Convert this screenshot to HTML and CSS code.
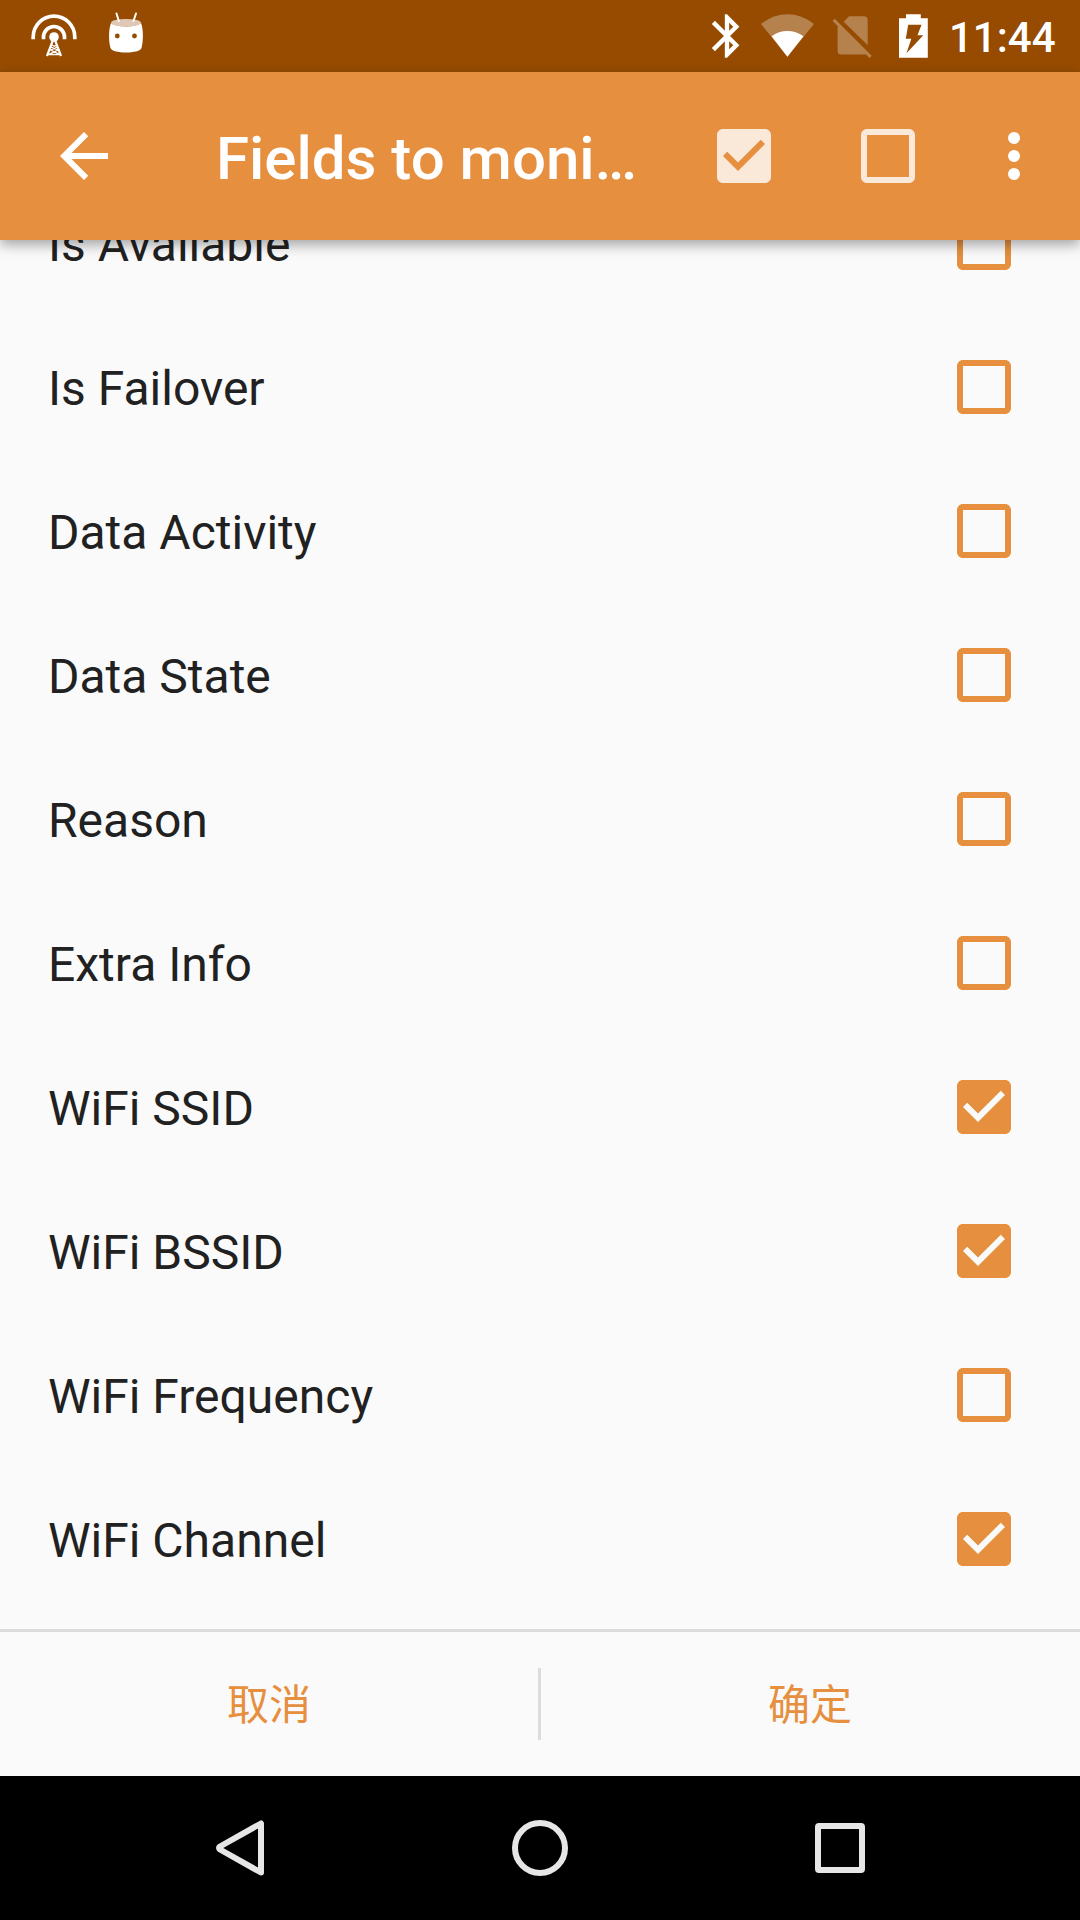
FILE: index.html
```html
<!DOCTYPE html>
<html lang="zh-CN">
<head>
<meta charset="utf-8">
<title>Fields to monitor</title>
<link rel="stylesheet" href="styles.css">
</head>
<body>
<svg class="defs" width="0" height="0">
  <symbol id="off" viewBox="0 0 24 24"><path d="M19 5v14H5V5h14m0-2H5c-1.100 0-2 .9-2 2v14c0 1.100.9 2 2 2h14c1.100 0 2-.9 2-2V5c0-1.100-.9-2-2-2z"/></symbol>
  <symbol id="on" viewBox="0 0 24 24"><path d="M19 3H5c-1.110 0-2 .9-2 2v14c0 1.100.89 2 2 2h14c1.110 0 2-.9 2-2V5c0-1.100-.89-2-2-2zm-9 14l-5-5 1.410-1.410L10 14.170l7.590-7.590L19 8l-9 9z"/></symbol>
</svg>
<div class="screen">
  <header class="status">
    <div class="status-group">
      <svg width="48" height="48" viewBox="30 12 48 48" fill="none" stroke="#fff">
        <path d="M33.200 39.300V37a20.800 20.800 0 0 1 41.600 0v2.300M43.500 39.300V37a10.500 10.500 0 0 1 21 0v2.300" stroke-width="3.700"/>
        <circle cx="54" cy="37" r="4.800" fill="#fff" stroke="none"/>
        <path d="M53 40L47 56M55 40l6 16" stroke-width="2.200"/>
        <path d="M51.500 45l5.500 2.500-6.500 2.500 8.500 4M57 45l-5.500 2.500 6.500 2.500-9.500 4.500h12" stroke-width="1.300"/>
      </svg>
      <svg width="48" height="48" viewBox="102 12 48 48">
        <path d="M111 23c5 4.500 25 4.500 30 0 2.500 6 2.500 18 .5 25-1.500 6-29.500 6-31 0-2-7-2-19 .5-25z" fill="#fff"/>
        <ellipse cx="126" cy="22.700" rx="15" ry="3.800" fill="#dfc9b6"/>
        <path d="M116.500 13.500l2.300 7.500M136 13.500l-2.500 7.500" stroke="#fff" stroke-width="2" stroke-linecap="round"/>
        <circle cx="117.300" cy="36" r="2.400" fill="#964b00"/><circle cx="134.500" cy="36" r="2.400" fill="#964b00"/>
      </svg>
    </div>
    <div class="status-group status-right">
      <svg class="bluetooth" width="52" height="52" viewBox="0 0 24 24" fill="#fff"><path d="M17.710 7.710L12 2h-1v7.590L6.410 5 5 6.410 10.590 12 5 17.590 6.410 19 11 14.410V22h1l5.710-5.710-4.300-4.290 4.300-4.290zM13 5.830l1.880 1.880L13 9.590V5.830zm1.880 10.460L13 18.170v-3.760l1.880 1.880z"/></svg>
      <svg width="54" height="50" viewBox="760 11 54 50" fill="#fff"><path d="M787.400 56.800L761 24q12-9.800 26.400-9.800T814 24z" opacity=".3"/><path d="M787.400 56.800L771.600 36.300q7-5.300 15.800-5.300t16.100 5.300z"/></svg>
      <svg class="sim" width="42" height="50" viewBox="831 11 42 50" fill="#fff"><path opacity=".3" d="M849 16.300h14.700q4 0 4 4v24.900L843.700 21.700zM834.700 18.700L871.700 55.700l-2.200 2.200-3.400-3.400H841.100q-3.500 0-3.500-3.500V26l-5.100-5.100z"/></svg>
      <svg class="battery" width="30" height="50" viewBox="898 11 30 50"><path d="M906 14.200h14.800v4.100h7v39.500H899V18.300h7z" fill="#fff"/><path d="M908.200 24.700h13.300l-4 10.500h5.800L906.500 53.200l4.800-14.500h-5.500z" fill="#964b00"/></svg>
      <span class="clock">11:44</span>
    </div>
  </header>
  <div class="appbar">
    <svg width="72" height="72" viewBox="0 0 24 24"><path d="M20 11H7.830l5.590-5.590L12 4l-8 8 8 8 1.410-1.410L7.830 13H20v-2z"/></svg>
    <h1 class="title">Fields to moni…</h1>
    <div class="actions">
      <svg class="soft" width="72" height="72"><use href="#on"/></svg>
      <svg class="soft" width="72" height="72"><use href="#off"/></svg>
      <svg class="more" width="72" height="72" viewBox="0 0 24 24"><circle cx="12" cy="6" r="2"/><circle cx="12" cy="12" r="2"/><circle cx="12" cy="18" r="2"/></svg>
    </div>
  </div>
  <main class="viewport">
    <ul class="fields">
      <li class="field"><span>Is Available</span><svg width="72" height="72"><use href="#off"/></svg></li>
      <li class="field"><span>Is Failover</span><svg width="72" height="72"><use href="#off"/></svg></li>
      <li class="field"><span>Data Activity</span><svg width="72" height="72"><use href="#off"/></svg></li>
      <li class="field"><span>Data State</span><svg width="72" height="72"><use href="#off"/></svg></li>
      <li class="field"><span>Reason</span><svg width="72" height="72"><use href="#off"/></svg></li>
      <li class="field"><span>Extra Info</span><svg width="72" height="72"><use href="#off"/></svg></li>
      <li class="field"><span>WiFi SSID</span><svg width="72" height="72"><use href="#on"/></svg></li>
      <li class="field"><span>WiFi BSSID</span><svg width="72" height="72"><use href="#on"/></svg></li>
      <li class="field"><span>WiFi Frequency</span><svg width="72" height="72"><use href="#off"/></svg></li>
      <li class="field"><span>WiFi Channel</span><svg width="72" height="72"><use href="#on"/></svg></li>
    </ul>
  </main>
  <div class="buttons">
    <button class="button">取消</button>
    <div class="separator"></div>
    <button class="button">确定</button>
  </div>
  <nav class="nav">
    <svg width="60" height="60" viewBox="0 0 60 60"><path d="M51 5.500v49L10 31.500q-2-1.500 0-3z"/></svg>
    <svg width="60" height="60" viewBox="0 0 60 60"><circle cx="30" cy="30" r="25"/></svg>
    <svg width="60" height="60" viewBox="0 0 60 60"><rect x="8" y="8" width="44" height="44" rx="1"/></svg>
  </nav>
</div>
</body>
</html>
```

FILE: styles.css
```css
* { box-sizing: border-box; }
body { margin: 0; font-family: Roboto, "Noto Sans CJK SC", sans-serif; }
svg { display: block; flex: none; }
.defs { display: none; }
.screen {
  width: 1080px;
  height: 1920px;
  display: flex;
  flex-direction: column;
  overflow: hidden;
  background: #fafafa;
}
.status {
  height: 72px;
  flex: none;
  display: flex;
  justify-content: space-between;
  align-items: center;
  padding: 0 24px 0 30px;
  background: #964b00;
  color: #fff;
}
.status-group { display: flex; align-items: center; gap: 24px; }
.status-right { gap: 0; }
.bluetooth { margin-right: 7px; }
.sim { margin-left: 17px; }
.battery { margin-left: 25px; }
.clock {
  margin-left: 21px;
  width: 107px;
  font-size: 42px;
  font-weight: 500;
  line-height: 50px;
  padding-top: 4px;
  white-space: nowrap;
}
.appbar {
  height: 168px;
  flex: none;
  display: flex;
  align-items: center;
  padding: 0 30px 0 48px;
  background: #e68f3e;
  fill: #fff;
  color: #fff;
  z-index: 1;
  box-shadow: 0 5px 12px rgba(0, 0, 0, .34);
}
.title {
  margin: 6px 0 0 96px;
  font-size: 60px;
  font-weight: 500;
  line-height: 72px;
  white-space: nowrap;
}
.actions { display: flex; margin-left: auto; }
.soft { fill: #fae8d8; margin-right: 72px; }
.more { margin-left: -18px; }
.viewport { height: 1389px; flex: none; overflow: hidden; }
.fields { list-style: none; margin: -69px 0 0; padding: 0; }
.field {
  height: 144px;
  display: flex;
  align-items: center;
  justify-content: space-between;
  padding: 0 60px 0 48px;
  font-size: 48px;
  line-height: 56px;
  color: #212121;
  fill: #e68f3e;
}
.field span { padding-top: 3px; }
.buttons {
  height: 147px;
  flex: none;
  display: flex;
  align-items: center;
  border-top: 3px solid #dbdcdb;
  padding-right: 1px;
}
.separator { width: 3px; height: 72px; background: #dbdcdb; }
.button {
  flex: 1;
  height: 144px;
  padding: 4px 0 0;
  border: 0;
  background: none;
  color: #e68f3e;
  font: 400 42px/60px Roboto, "Noto Sans CJK SC", sans-serif;
}
.nav {
  height: 144px;
  flex: none;
  display: flex;
  align-items: center;
  justify-content: center;
  gap: 240px;
  background: #000;
  fill: none;
  stroke: #e6e6e6;
  stroke-width: 6px;
  stroke-linejoin: round;
}
```
